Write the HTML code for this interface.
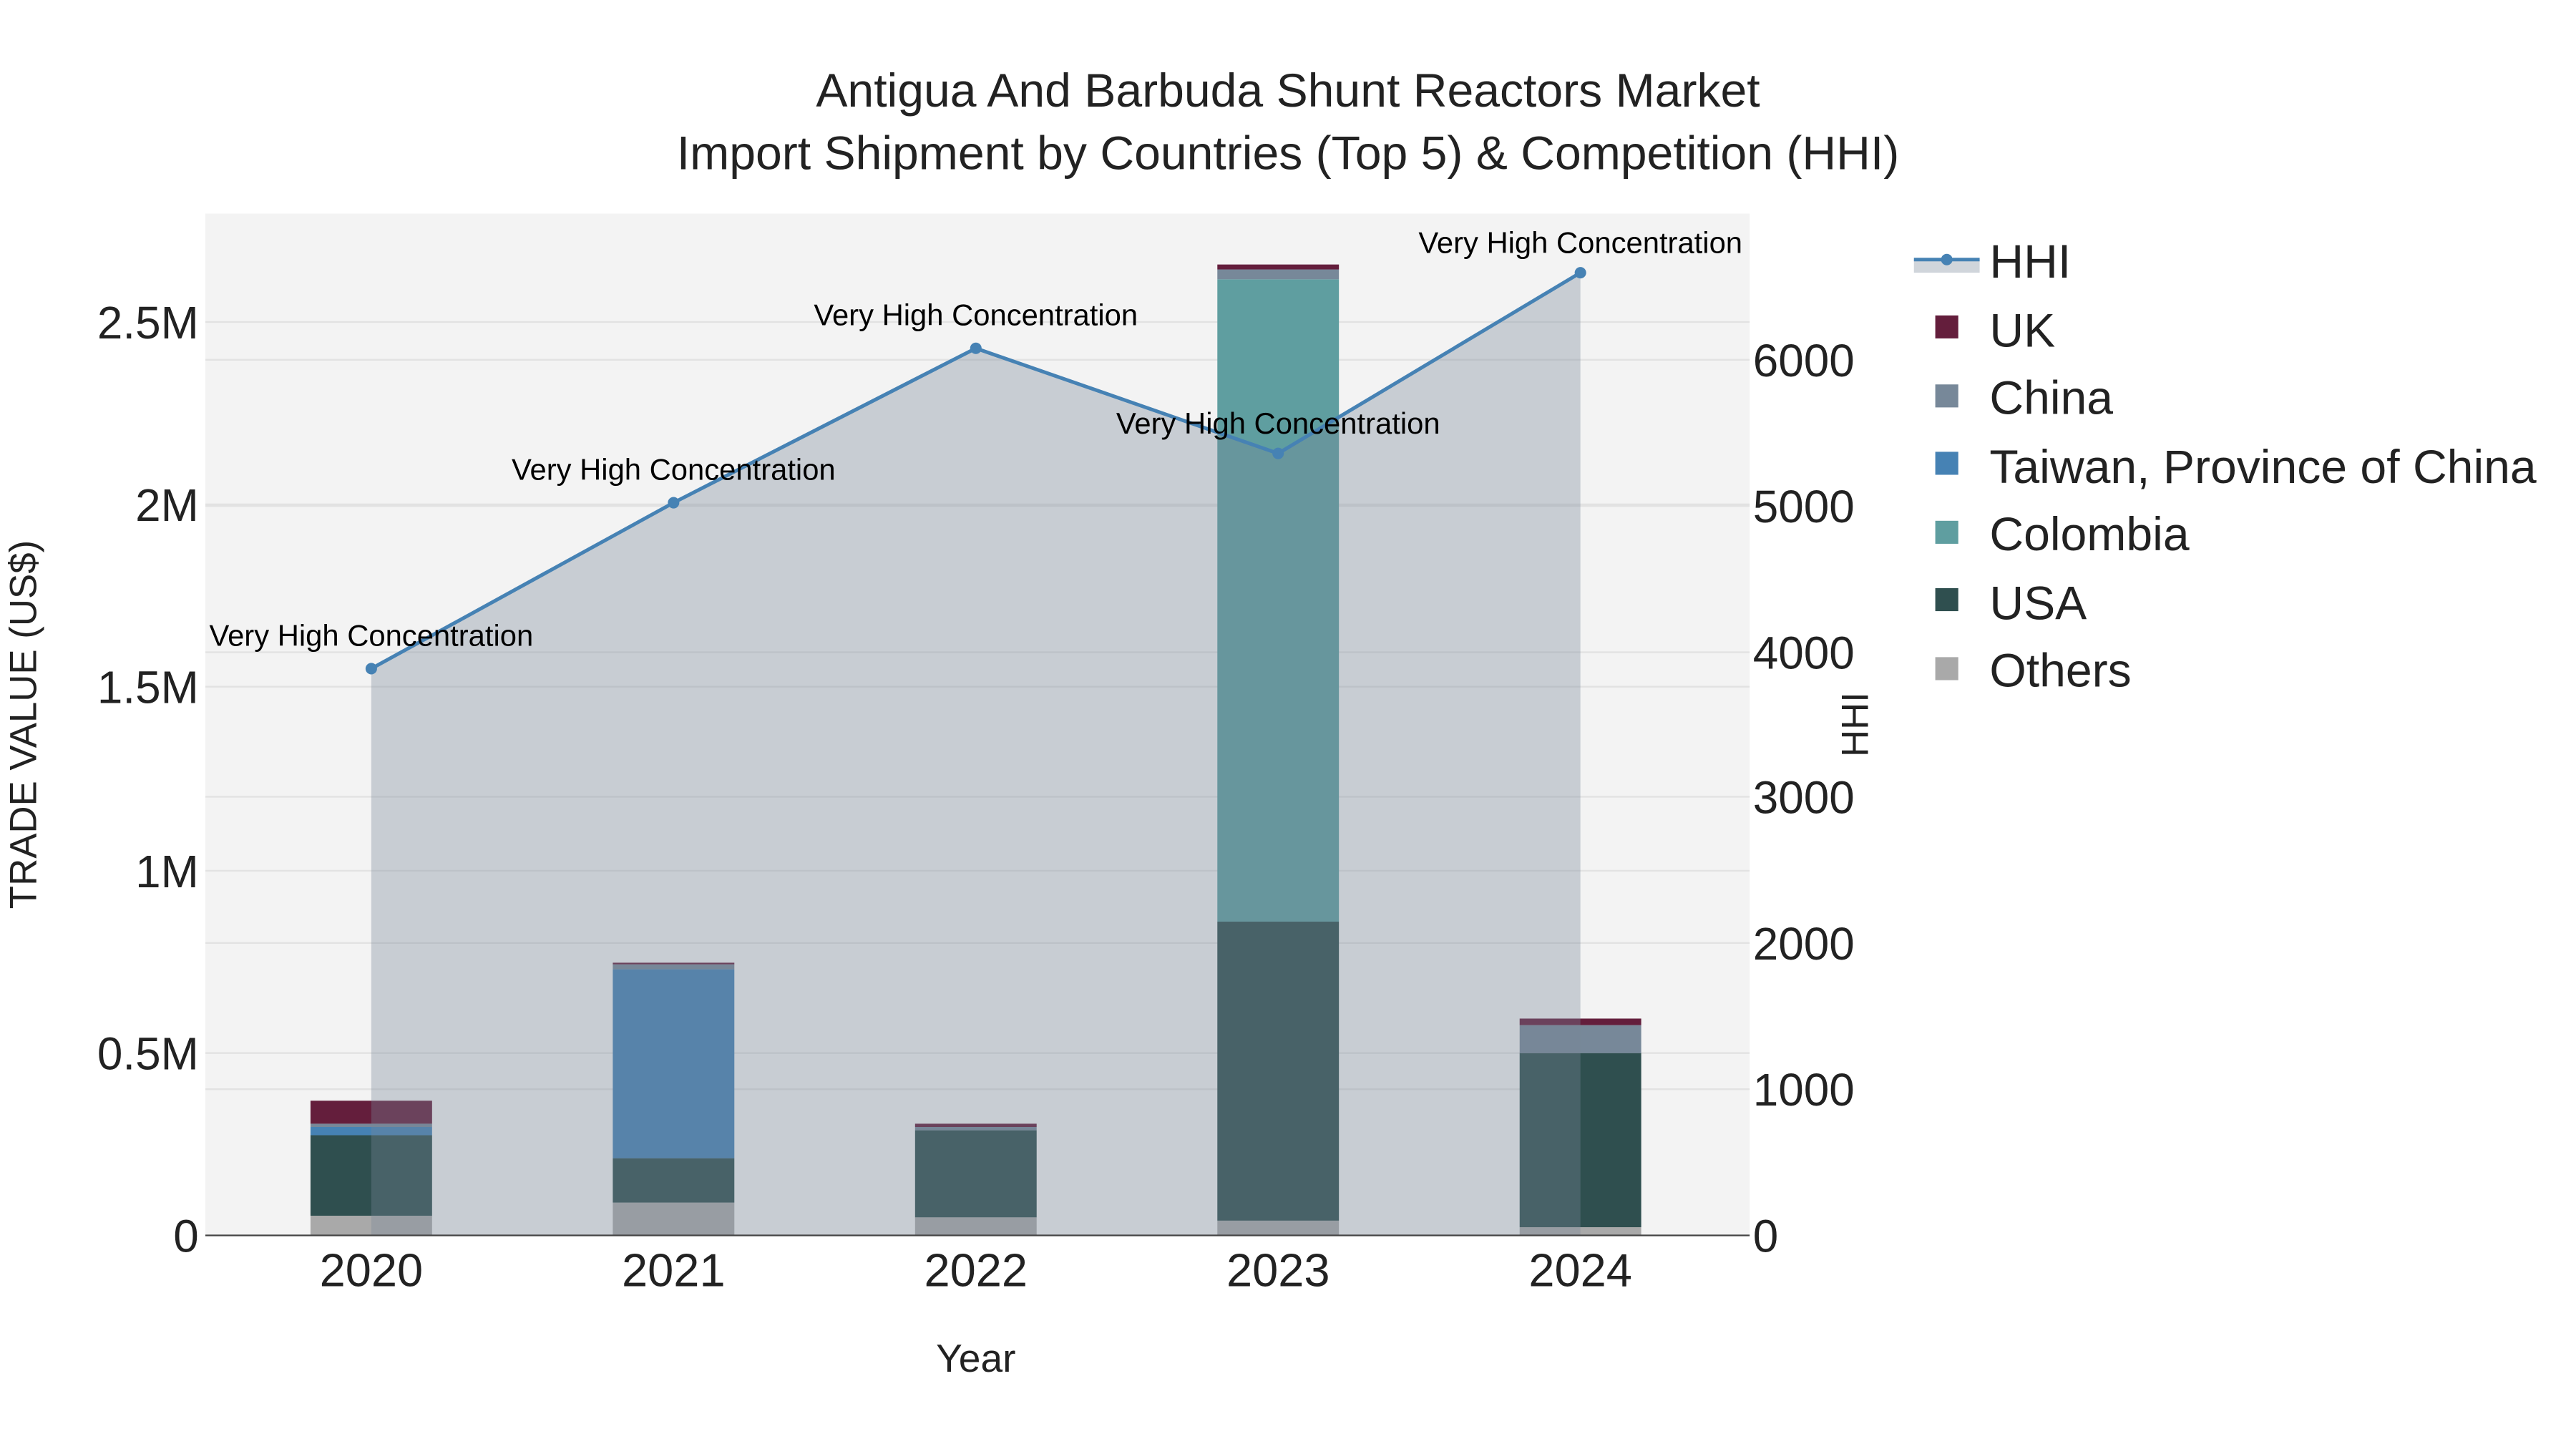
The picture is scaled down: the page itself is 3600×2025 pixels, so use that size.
<!DOCTYPE html>
<html><head><meta charset="utf-8"><style>
html,body{margin:0;padding:0;background:#fff;}
svg{display:block;}
text{font-family:"Liberation Sans",Arial,sans-serif;}
</style></head><body>
<svg width="3600" height="2025" viewBox="0 0 1568 882" preserveAspectRatio="none" xmlns="http://www.w3.org/2000/svg">
<rect width="1568" height="882" fill="#fff"/>
<rect x="125" y="130" width="940" height="622" fill="#f3f3f3"/>
<g stroke="#e2e2e2" stroke-width="1">
<line x1="125" x2="1065" y1="641" y2="641"/><line x1="125" x2="1065" y1="530" y2="530"/>
<line x1="125" x2="1065" y1="418" y2="418"/><line x1="125" x2="1065" y1="307" y2="307"/>
<line x1="125" x2="1065" y1="196" y2="196"/>
<line x1="125" x2="1065" y1="663" y2="663"/><line x1="125" x2="1065" y1="574" y2="574"/>
<line x1="125" x2="1065" y1="485" y2="485"/><line x1="125" x2="1065" y1="397" y2="397"/>
<line x1="125" x2="1065" y1="308" y2="308"/><line x1="125" x2="1065" y1="219" y2="219"/>
</g>
<g>
<rect x="189" y="740" width="74" height="12" fill="#a9a9a9"/>
<rect x="189" y="691" width="74" height="49" fill="#2f4f4f"/>
<rect x="189" y="686" width="74" height="5" fill="#4682b4"/>
<rect x="189" y="684" width="74" height="2" fill="#778899"/>
<rect x="189" y="670" width="74" height="14" fill="#641e3c"/>

<rect x="373" y="732" width="74" height="20" fill="#a9a9a9"/>
<rect x="373" y="705" width="74" height="27" fill="#2f4f4f"/>
<rect x="373" y="590" width="74" height="115" fill="#4682b4"/>
<rect x="373" y="587" width="74" height="3" fill="#778899"/>
<rect x="373" y="586" width="74" height="1" fill="#641e3c"/>

<rect x="557" y="741" width="74" height="11" fill="#a9a9a9"/>
<rect x="557" y="688" width="74" height="53" fill="#2f4f4f"/>
<rect x="557" y="686" width="74" height="2" fill="#778899"/>
<rect x="557" y="684" width="74" height="2" fill="#641e3c"/>

<rect x="741" y="743" width="74" height="9" fill="#a9a9a9"/>
<rect x="741" y="561" width="74" height="182" fill="#2f4f4f"/>
<rect x="741" y="170" width="74" height="391" fill="#5f9ea0"/>
<rect x="741" y="164" width="74" height="6" fill="#778899"/>
<rect x="741" y="161" width="74" height="3" fill="#641e3c"/>

<rect x="925" y="747" width="74" height="5" fill="#a9a9a9"/>
<rect x="925" y="641" width="74" height="106" fill="#2f4f4f"/>
<rect x="925" y="624" width="74" height="17" fill="#778899"/>
<rect x="925" y="620" width="74" height="4" fill="#641e3c"/>
</g>
<polygon points="226,752 226,407 410,306 594,212 778,276 962,166 962,752" fill="#778899" fill-opacity="0.35"/>
<polyline points="226,407 410,306 594,212 778,276 962,166" fill="none" stroke="#4682b4" stroke-width="2.2"/>
<g fill="#4682b4">
<circle cx="226" cy="407" r="3.5"/><circle cx="410" cy="306" r="3.5"/><circle cx="594" cy="212" r="3.5"/><circle cx="778" cy="276" r="3.5"/><circle cx="962" cy="166" r="3.5"/>
</g>
<line x1="125" x2="1065" y1="752" y2="752" stroke="#444" stroke-width="1"/>
<g font-size="18.2" fill="#000" text-anchor="middle">
<text x="226" y="393">Very High Concentration</text>
<text x="410" y="292">Very High Concentration</text>
<text x="594" y="198">Very High Concentration</text>
<text x="778" y="264">Very High Concentration</text>
<text x="962" y="154">Very High Concentration</text>
</g>
<g font-size="27.8" fill="#222" text-anchor="end">
<text x="121" y="762">0</text><text x="121" y="651">0.5M</text><text x="121" y="540">1M</text>
<text x="121" y="428">1.5M</text><text x="121" y="317">2M</text><text x="121" y="206">2.5M</text>
</g>
<g font-size="27.8" fill="#222" text-anchor="start">
<text x="1067" y="762">0</text><text x="1067" y="673">1000</text><text x="1067" y="584">2000</text>
<text x="1067" y="495">3000</text><text x="1067" y="407">4000</text><text x="1067" y="318">5000</text>
<text x="1067" y="229">6000</text>
</g>
<g font-size="28.3" fill="#222" text-anchor="middle">
<text x="226" y="783">2020</text><text x="410" y="783">2021</text><text x="594" y="783">2022</text>
<text x="778" y="783">2023</text><text x="962" y="783">2024</text>
</g>
<text x="594" y="835" font-size="24" fill="#222" text-anchor="middle">Year</text>
<text transform="translate(22,441) rotate(-90)" font-size="23" fill="#222" text-anchor="middle">TRADE VALUE (US$)</text>
<text transform="translate(1137,441) rotate(-90)" font-size="23" fill="#222" text-anchor="middle">HHI</text>
<g font-size="28.8" fill="#222" text-anchor="middle">
<text x="784" y="65">Antigua And Barbuda Shunt Reactors Market</text>
<text x="784" y="103">Import Shipment by Countries (Top 5) &amp; Competition (HHI)</text>
</g>
<rect x="1165" y="158" width="40" height="8" fill="#778899" fill-opacity="0.35"/>
<line x1="1165" x2="1205" y1="158" y2="158" stroke="#4682b4" stroke-width="2.2"/>
<circle cx="1185" cy="158" r="3.5" fill="#4682b4"/>
<rect x="1178" y="192" width="14" height="14" fill="#641e3c"/>
<rect x="1178" y="234" width="14" height="14" fill="#778899"/>
<rect x="1178" y="275" width="14" height="14" fill="#4682b4"/>
<rect x="1178" y="317" width="14" height="14" fill="#5f9ea0"/>
<rect x="1178" y="358" width="14" height="14" fill="#2f4f4f"/>
<rect x="1178" y="400" width="14" height="14" fill="#a9a9a9"/>
<g font-size="28.8" fill="#222">
<text x="1211" y="169">HHI</text>
<text x="1211" y="211">UK</text>
<text x="1211" y="252">China</text>
<text x="1211" y="294">Taiwan, Province of China</text>
<text x="1211" y="335">Colombia</text>
<text x="1211" y="377">USA</text>
<text x="1211" y="418">Others</text>
</g>
</svg>
</body></html>
